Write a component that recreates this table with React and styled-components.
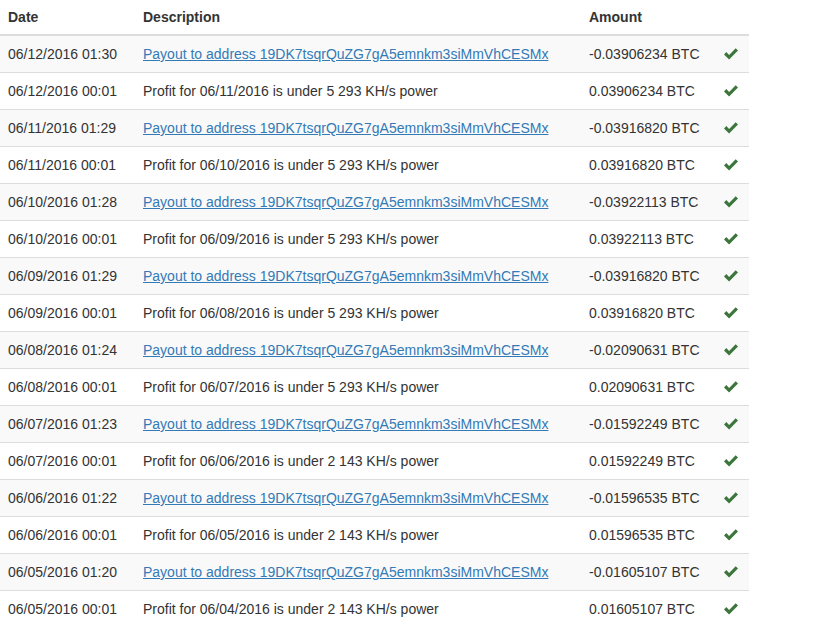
import React from 'react';
import styled, { createGlobalStyle } from 'styled-components';

const GlobalStyle = createGlobalStyle`
  body {
    margin: 0;
    background: #fff;
    font-family: 'Liberation Sans', Arial, Helvetica, sans-serif;
    font-size: 14px;
    line-height: 20px;
    color: #333;
  }
`;

const Table = styled.table`
  width: 749px;
  table-layout: fixed;
  border-collapse: collapse;
  border-spacing: 0;
`;

const Th = styled.th`
  text-align: left;
  font-weight: bold;
  padding: 7px 8px 7px;
  border-bottom: 2px solid #ddd;
  vertical-align: bottom;
  white-space: nowrap;
`;

const Row = styled.tr`
  background: ${p => (p.$striped ? '#f9f9f9' : '#fff')};
`;

const Td = styled.td`
  padding: 8px;
  border-top: 1px solid #ddd;
  white-space: nowrap;
  vertical-align: top;
`;

const Link = styled.a`
  color: #337ab7;
  text-decoration: underline;
  cursor: pointer;
`;

const CheckIcon = styled.svg`
  display: block;
  width: 14px;
  height: 12px;
  margin-top: 4px;
  fill: #3c763d;
`;

const Check = () => (
  <CheckIcon viewBox="0 0 14 12">
    <path d="M0 6.4 L2.3 4.1 L5.1 6.9 L11.7 0.3 L14 2.6 L5.1 11.5 Z" />
  </CheckIcon>
);

const ADDRESS = '19DK7tsqrQuZG7gA5emnkm3siMmVhCESMx';

const days = [
  { pay: '06/12/2016 01:30', prof: '06/12/2016 00:01', prev: '06/11/2016', amt: '0.03906234', power: '5 293' },
  { pay: '06/11/2016 01:29', prof: '06/11/2016 00:01', prev: '06/10/2016', amt: '0.03916820', power: '5 293' },
  { pay: '06/10/2016 01:28', prof: '06/10/2016 00:01', prev: '06/09/2016', amt: '0.03922113', power: '5 293' },
  { pay: '06/09/2016 01:29', prof: '06/09/2016 00:01', prev: '06/08/2016', amt: '0.03916820', power: '5 293' },
  { pay: '06/08/2016 01:24', prof: '06/08/2016 00:01', prev: '06/07/2016', amt: '0.02090631', power: '5 293' },
  { pay: '06/07/2016 01:23', prof: '06/07/2016 00:01', prev: '06/06/2016', amt: '0.01592249', power: '2 143' },
  { pay: '06/06/2016 01:22', prof: '06/06/2016 00:01', prev: '06/05/2016', amt: '0.01596535', power: '2 143' },
  { pay: '06/05/2016 01:20', prof: '06/05/2016 00:01', prev: '06/04/2016', amt: '0.01605107', power: '2 143' },
];

const rows = days.flatMap(d => [
  { date: d.pay, link: true, text: `Payout to address ${ADDRESS}`, amount: `-${d.amt} BTC` },
  { date: d.prof, link: false, text: `Profit for ${d.prev} is under ${d.power} KH/s power`, amount: `${d.amt} BTC` },
]);

export default function App() {
  return (
    <>
      <GlobalStyle />
      <Table>
        <colgroup>
          <col style={{ width: 135 }} />
          <col style={{ width: 446 }} />
          <col style={{ width: 135 }} />
          <col style={{ width: 33 }} />
        </colgroup>
        <thead>
          <tr>
            <Th>Date</Th>
            <Th>Description</Th>
            <Th>Amount</Th>
            <Th />
          </tr>
        </thead>
        <tbody>
          {rows.map((r, i) => (
            <Row key={i} $striped={i % 2 === 0}>
              <Td>{r.date}</Td>
              <Td>{r.link ? <Link>{r.text}</Link> : r.text}</Td>
              <Td>{r.amount}</Td>
              <Td><Check /></Td>
            </Row>
          ))}
        </tbody>
      </Table>
    </>
  );
}
